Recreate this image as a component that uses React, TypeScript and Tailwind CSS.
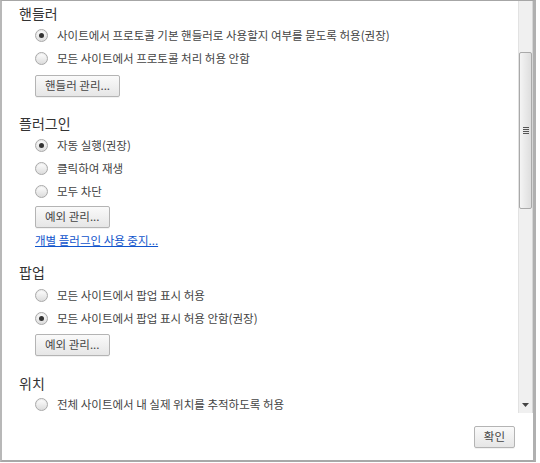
import React from "react";

const font = { fontFamily: '"Noto Sans CJK KR", "Noto Sans", sans-serif' };

function Radio({ checked, label }: { checked?: boolean; label: string }) {
  return (
    <div className="flex items-center h-[23px] pl-[33px]">
      <span className="w-[13px] h-[13px] rounded-full border border-[#a9a9a9] bg-gradient-to-b from-[#ffffff] to-[#dcdcdc] flex items-center justify-center shadow-[inset_0_1px_1px_rgba(0,0,0,0.08)]">
        {checked && <span className="w-[5px] h-[5px] rounded-full bg-[#333]" />}
      </span>
      <span className="ml-[9px] text-[11.5px] text-[#444] leading-none">{label}</span>
    </div>
  );
}

function Btn({ label, className = "" }: { label: string; className?: string }) {
  return (
    <div
      className={
        "h-[22px] flex items-center text-[11.5px] leading-none text-[#444] border border-[#b4b4b4] rounded-[2px] bg-gradient-to-b from-[#fafafa] to-[#e6e6e6] shadow-[0_1px_0_rgba(0,0,0,0.05)] " +
        className
      }
    >
      {label}
    </div>
  );
}

function Heading({ label, className = "" }: { label: string; className?: string }) {
  return (
    <div className={"h-[20px] flex items-center pl-[17px] text-[14px] leading-none text-[#333] " + className}>
      {label}
    </div>
  );
}

export default function App() {
  return (
    <div className="w-[540px] h-[463px] bg-white" style={font}>
      <div className="w-[536px] h-[462px] border-t border-t-[#a6a6a6] border-l-2 border-l-[#b8b8b8] border-r-[3px] border-r-[#b0b0b0] border-b-2 border-b-[#a8a8a8] flex flex-col">
        <div className="flex h-[412px] shrink-0">
          <div className="flex-1 overflow-hidden pt-[2px]">
            <Heading label="핸들러" />
            <div className="h-[1px]" />
            <Radio checked label="사이트에서 프로토콜 기본 핸들러로 사용할지 여부를 묻도록 허용(권장)" />
            <Radio label="모든 사이트에서 프로토콜 처리 허용 안함" />
            <div className="flex pl-[33px] mt-[5px]">
              <Btn label="핸들러 관리..." className="px-[9px]" />
            </div>

            <Heading label="플러그인" className="mt-[16px]" />
            <div className="h-[1px]" />
            <Radio checked label="자동 실행(권장)" />
            <Radio label="클릭하여 재생" />
            <Radio label="모두 차단" />
            <div className="flex pl-[33px] mt-[3px]">
              <Btn label="예외 관리..." className="px-[9px]" />
            </div>
            <div className="pl-[33px] mt-[4px] h-[18px] flex items-center">
              <span className="text-[11.5px] text-[#1155cc] underline leading-none">개별 플러그인 사용 중지...</span>
            </div>

            <Heading label="팝업" className="mt-[12px]" />
            <div className="h-[2px]" />
            <Radio label="모든 사이트에서 팝업 표시 허용" />
            <Radio checked label="모든 사이트에서 팝업 표시 허용 안함(권장)" />
            <div className="flex pl-[33px] mt-[4px]">
              <Btn label="예외 관리..." className="px-[9px]" />
            </div>

            <Heading label="위치" className="mt-[17px]" />
            <Radio label="전체 사이트에서 내 실제 위치를 추적하도록 허용" />
          </div>
          <div className="w-[15px] bg-[#f0f0f0] border-l border-[#e2e2e2] border-r border-r-[#d6d6d6] flex flex-col items-center">
            <div className="mt-[51px] w-[13px] h-[157px] rounded-[2px] border border-[#a9a9a9] bg-gradient-to-r from-[#f4f4f4] to-[#dedede] flex items-center justify-center">
              <div className="flex flex-col gap-[1px]">
                <div className="w-[6px] h-[1px] bg-[#555]" />
                <div className="w-[6px] h-[1px] bg-[#555]" />
                <div className="w-[6px] h-[1px] bg-[#555]" />
                <div className="w-[6px] h-[1px] bg-[#555]" />
              </div>
            </div>
            <div className="flex-1" />
            <svg width="7" height="4" viewBox="0 0 7 4" className="mb-[6px]">
              <polygon points="0,0 7,0 3.5,4" fill="#444" />
            </svg>
          </div>
        </div>
        <div className="flex-1 flex justify-end items-start pt-[13px] pr-[18px]">
          <Btn label="확인" className="px-[9px]" />
        </div>
      </div>
    </div>
  );
}
